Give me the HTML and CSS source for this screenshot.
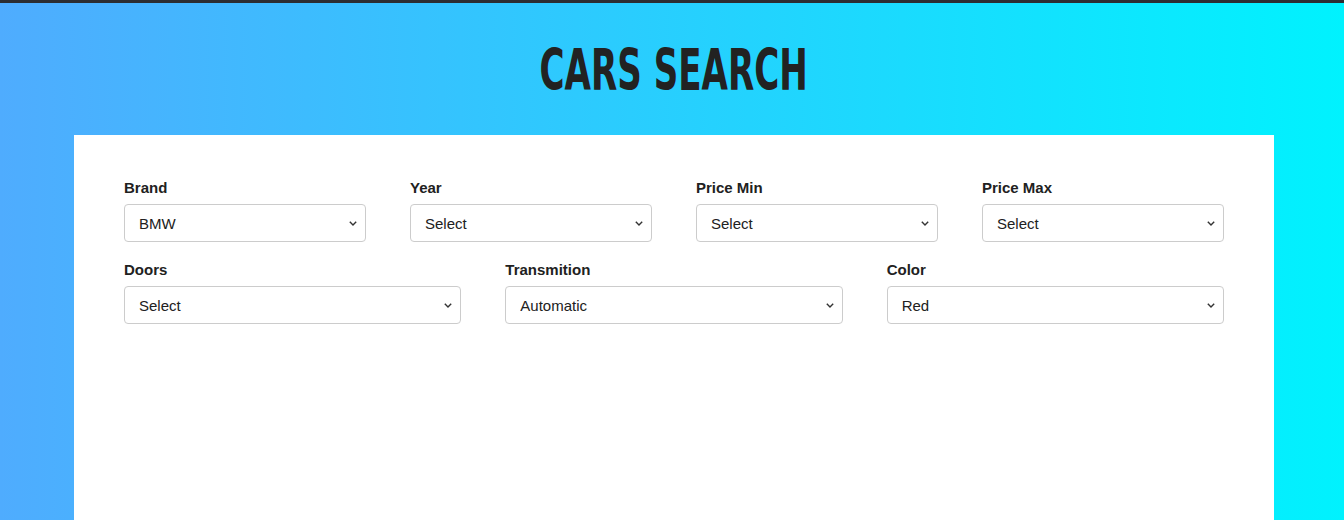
FILE: index.html
```html
<!DOCTYPE html>
<html lang="en">
<head>
<meta charset="utf-8">
<title>Cars Search</title>
<link rel="stylesheet" href="styles.css">
</head>
<body>
<div class="topbar"></div>
<header class="hero">
  <h1 class="title">CARS SEARCH</h1>
</header>
<main class="card">
  <form class="search">
    <div class="row row-4">
      <div class="field">
        <label class="label" for="brand">Brand</label>
        <select class="select" id="brand"><option>BMW</option></select>
      </div>
      <div class="field">
        <label class="label" for="year">Year</label>
        <select class="select" id="year"><option>Select</option></select>
      </div>
      <div class="field">
        <label class="label" for="pmin">Price Min</label>
        <select class="select" id="pmin"><option>Select</option></select>
      </div>
      <div class="field">
        <label class="label" for="pmax">Price Max</label>
        <select class="select" id="pmax"><option>Select</option></select>
      </div>
    </div>
    <div class="row row-3">
      <div class="field">
        <label class="label" for="doors">Doors</label>
        <select class="select" id="doors"><option>Select</option></select>
      </div>
      <div class="field">
        <label class="label" for="trans">Transmition</label>
        <select class="select" id="trans"><option>Automatic</option></select>
      </div>
      <div class="field">
        <label class="label" for="color">Color</label>
        <select class="select" id="color"><option>Red</option></select>
      </div>
    </div>
  </form>
</main>
</body>
</html>
```
FILE: styles.css
```css
html, body {
  margin: 0;
  padding: 0;
}
body {
  height: 520px;
  overflow: hidden;
  background: linear-gradient(to right, #4facfe 0%, #00f2fe 100%);
  font-family: "Liberation Sans", Arial, sans-serif;
  color: #212121;
}
.topbar {
  height: 3px;
  background: #2c2d31;
}
.hero {
  height: 132px;
  display: flex;
  justify-content: center;
}
.title {
  margin: 0 0 0 4px;
  padding-top: 38px;
  font-family: "DejaVu Sans", sans-serif;
  font-stretch: condensed;
  font-weight: bold;
  font-size: 57px;
  line-height: 58px;
  color: #222;
  transform: scaleX(0.665);
  transform-origin: center top;
  white-space: nowrap;
}
.card {
  width: 1200px;
  margin: 0 0 0 74px;
  background: #fff;
  min-height: 385px;
  box-sizing: border-box;
  padding: 44px 50px 0;
}
.row {
  display: grid;
  column-gap: 44px;
}
.row-4 {
  grid-template-columns: repeat(4, 1fr);
}
.row-3 {
  grid-template-columns: repeat(3, 1fr);
  margin-top: 19px;
}
.field {
  display: flex;
  flex-direction: column;
}
.label {
  font-weight: bold;
  font-size: 15px;
  line-height: 17px;
  margin-bottom: 8px;
  color: #212121;
}
.select {
  -webkit-appearance: none;
  appearance: none;
  height: 38px;
  box-sizing: border-box;
  border: 1px solid #cccccc;
  border-radius: 4px;
  background-color: #fff;
  background-image: url("data:image/svg+xml,%3Csvg xmlns='http://www.w3.org/2000/svg' width='8' height='5' viewBox='0 0 8 5'%3E%3Cpolyline points='0.8,0.8 4,4 7.2,0.8' fill='none' stroke='%23333' stroke-width='1.4'/%3E%3C/svg%3E");
  background-repeat: no-repeat;
  background-position: right 8px center;
  font-family: "Liberation Sans", Arial, sans-serif;
  font-size: 15px;
  color: #212121;
  padding: 0 24px 0 14px;
  width: 100%;
}
```
